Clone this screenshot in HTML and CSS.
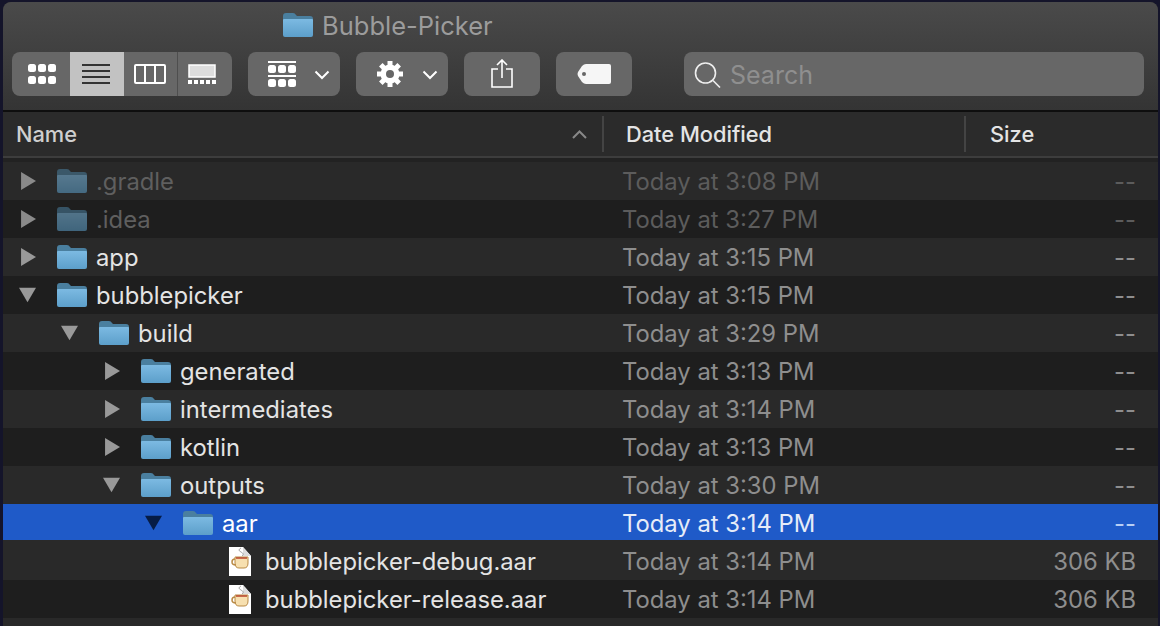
FILE: index.html

```html
<!DOCTYPE html>
<html lang="en">
<head>
  <meta charset="UTF-8" />
  <title>Bubble-Picker</title>
  <link rel="stylesheet" href="styles.css">
</head>
<body>
  <svg class="defs" width="0" height="0">
    <defs>
      <linearGradient id="folderFront" x1="0" y1="0" x2="0" y2="1">
        <stop offset="0" stop-color="#7cbae2" />
        <stop offset="1" stop-color="#5c9fca" />
      </linearGradient>
      <symbol id="folder" viewBox="0 0 30 24">
        <path d="M0 3q0-3 3-3h7q2 0 3 2l1 1h13q3 0 3 3v4H0z" fill="#4a7f9f" />
        <path d="M0 7q0-1 1-1h28q1 0 1 1v15q0 2-2 2H2q-2 0-2-2z" fill="url(#folderFront)" />
      </symbol>
      <symbol id="doc" viewBox="0 0 22 29">
        <path d="M0 0h14l8 9v20H0z" fill="#fff" />
        <path d="M14 0v9h8" fill="#ddd" />
        <path d="M12 1q-4 2 0 4t1 4" fill="none" stroke="#a9a9a9" />
        <path d="M6 10h13v6q0 5-4 5h-5q-4 0-4-5z" fill="#f7e0b0" stroke="#b98a45" />
        <path d="M7 11h11" stroke="#b8452c" stroke-width="1.5" />
        <path d="M6 12q-3 0-3 3t4 3" fill="none" stroke="#b98a45" stroke-width="1.5" />
      </symbol>
    </defs>
  </svg>

  <div class="window">
    <header class="toolbar">
      <div class="title">
        <svg class="title-icon"><use href="#folder" /></svg>
        <span>Bubble-Picker</span>
      </div>
      <div class="tools">
        <div class="segments">
          <div class="seg seg-icons">
            <svg width="28" height="20" viewBox="0 0 28 20" fill="#fff"><rect y="0" width="8" height="8" rx="2.5"/><rect x="10" width="8" height="8" rx="2.5"/><rect x="20" width="8" height="8" rx="2.5"/><rect y="12" width="8" height="8" rx="2.5"/><rect x="10" y="12" width="8" height="8" rx="2.5"/><rect x="20" y="12" width="8" height="8" rx="2.5"/></svg>
          </div>
          <div class="seg seg-list">
            <svg width="28" height="20" viewBox="0 0 28 20" fill="#333"><rect width="28" height="2"/><rect y="6" width="28" height="2"/><rect y="12" width="28" height="2"/><rect y="18" width="28" height="2"/></svg>
          </div>
          <div class="seg seg-cols">
            <svg width="32" height="20" viewBox="0 0 32 20" fill="none" stroke="#fff" stroke-width="2"><rect x="1" y="1" width="30" height="18" rx="1"/><path d="M11 1v18M21 1v18"/></svg>
          </div>
          <div class="seg seg-cover">
            <svg width="28" height="20" viewBox="0 0 28 20"><rect x="1" y="1" width="26" height="12" fill="#ddd" stroke="#fff" stroke-width="1.5"/><g fill="#fff"><rect y="16" width="4" height="4"/><rect x="6" y="16" width="4" height="4"/><rect x="12" y="16" width="4" height="4"/><rect x="18" y="16" width="4" height="4"/><rect x="24" y="16" width="4" height="4"/></g></svg>
          </div>
        </div>
        <div class="btn btn-menu">
          <svg width="28" height="26" viewBox="0 0 28 26" fill="#fff"><rect width="28" height="2"/><rect y="4" width="8" height="8" rx="2.5"/><rect x="10" y="4" width="8" height="8" rx="2.5"/><rect x="20" y="4" width="8" height="8" rx="2.5"/><rect y="14" width="28" height="2"/><rect y="18" width="8" height="8" rx="2.5"/><rect x="10" y="18" width="8" height="8" rx="2.5"/><rect x="20" y="18" width="8" height="8" rx="2.5"/></svg>
          <svg class="chevron" width="16" height="10" viewBox="0 0 16 10"><path d="M1.500 1.500 8 8l6.500-6.500" fill="none" stroke="#fff" stroke-width="2"/></svg>
        </div>
        <div class="btn btn-menu">
          <svg width="28" height="28" viewBox="0 0 28 28"><g stroke="#fff" stroke-width="5"><path d="M14 1v26M1 14h26M4.800 4.800l18.400 18.400M23.200 4.800 4.800 23.200"/></g><circle cx="14" cy="14" r="9.500" fill="#fff"/><circle cx="14" cy="14" r="4" fill="#666"/></svg>
          <svg class="chevron" width="16" height="10" viewBox="0 0 16 10"><path d="M1.500 1.500 8 8l6.500-6.500" fill="none" stroke="#fff" stroke-width="2"/></svg>
        </div>
        <div class="btn btn-share">
          <svg width="22" height="29" viewBox="0 0 22 29" fill="none" stroke="#fff" stroke-width="1.600"><path d="M7 10H1v18h20V10h-6"/><path d="M11 19V1M6 6l5-5 5 5"/></svg>
        </div>
        <div class="btn btn-tag">
          <svg width="34" height="20" viewBox="0 0 34 20"><path d="M9 0h23q2 0 2 2v16q0 2-2 2H9Q7 20 5 18L1 12q-1-2 0-4l4-6Q7 0 9 0z" fill="#f6f6f6"/><circle cx="7" cy="10" r="2" fill="#666"/></svg>
        </div>
        <div class="search">
          <svg width="27" height="27" viewBox="0 0 27 27" fill="none" stroke="#eee" stroke-width="1.600"><circle cx="11.500" cy="12" r="10"/><path d="m19 19.500 7 7"/></svg>
          <span>Search</span>
        </div>
      </div>
    </header>

    <div class="head">
      <div class="col-name">Name <svg class="sort" width="15" height="9" viewBox="0 0 15 9"><path d="M1 8l6.500-6.500L14 8" fill="none" stroke="#888" stroke-width="2"/></svg></div>
      <div class="col-date">Date Modified</div>
      <div class="col-size">Size</div>
    </div>

    <div class="rows">
      <div class="row dim">
        <div class="name"><i class="arrow right"></i><svg class="folder"><use href="#folder" /></svg>.gradle</div>
        <div class="date">Today at 3:08 PM</div><div class="size">--</div>
      </div>
      <div class="row dim">
        <div class="name"><i class="arrow right"></i><svg class="folder"><use href="#folder" /></svg>.idea</div>
        <div class="date">Today at 3:27 PM</div><div class="size">--</div>
      </div>
      <div class="row">
        <div class="name"><i class="arrow right"></i><svg class="folder"><use href="#folder" /></svg>app</div>
        <div class="date">Today at 3:15 PM</div><div class="size">--</div>
      </div>
      <div class="row">
        <div class="name"><i class="arrow down"></i><svg class="folder"><use href="#folder" /></svg>bubblepicker</div>
        <div class="date">Today at 3:15 PM</div><div class="size">--</div>
      </div>
      <div class="row lvl1">
        <div class="name"><i class="arrow down"></i><svg class="folder"><use href="#folder" /></svg>build</div>
        <div class="date">Today at 3:29 PM</div><div class="size">--</div>
      </div>
      <div class="row lvl2">
        <div class="name"><i class="arrow right"></i><svg class="folder"><use href="#folder" /></svg>generated</div>
        <div class="date">Today at 3:13 PM</div><div class="size">--</div>
      </div>
      <div class="row lvl2">
        <div class="name"><i class="arrow right"></i><svg class="folder"><use href="#folder" /></svg>intermediates</div>
        <div class="date">Today at 3:14 PM</div><div class="size">--</div>
      </div>
      <div class="row lvl2">
        <div class="name"><i class="arrow right"></i><svg class="folder"><use href="#folder" /></svg>kotlin</div>
        <div class="date">Today at 3:13 PM</div><div class="size">--</div>
      </div>
      <div class="row lvl2">
        <div class="name"><i class="arrow down"></i><svg class="folder"><use href="#folder" /></svg>outputs</div>
        <div class="date">Today at 3:30 PM</div><div class="size">--</div>
      </div>
      <div class="row lvl3 selected">
        <div class="name"><i class="arrow down"></i><svg class="folder"><use href="#folder" /></svg>aar</div>
        <div class="date">Today at 3:14 PM</div><div class="size">--</div>
      </div>
      <div class="row file">
        <div class="name"><svg class="doc"><use href="#doc" /></svg>bubblepicker-debug.aar</div>
        <div class="date">Today at 3:14 PM</div><div class="size">306 KB</div>
      </div>
      <div class="row file">
        <div class="name"><svg class="doc"><use href="#doc" /></svg>bubblepicker-release.aar</div>
        <div class="date">Today at 3:14 PM</div><div class="size">306 KB</div>
      </div>
      <div class="row"></div>
    </div>
  </div>
</body>
</html>
```

FILE: styles.css

```css
* {
  box-sizing: border-box;
}
html, body {
  height: 100%;
  overflow: hidden;
}
body {
  margin: 0;
  padding: 2px 2px 0 3px;
  background-color: #14142a;
  font-family: Inter, "Liberation Sans", sans-serif;
  color: #e4e4e4;
}
.defs {
  position: absolute;
}
.window {
  height: 100%;
  background-color: #292929;
  border-radius: 8px 8px 0 0;
  overflow: hidden;
}

/* toolbar */
.toolbar {
  height: 110px;
  padding-top: 8px;
  background: linear-gradient(#4a4a4a, #343434);
  border-bottom: 2px solid #0e0e0e;
}
.title {
  display: flex;
  align-items: center;
  height: 30px;
  padding-left: 280px;
  gap: 9px;
  font-size: 25.500px;
  color: #9c9c9c;
}
.title-icon {
  width: 30px;
  height: 24px;
}
.tools {
  display: flex;
  margin-top: 12px;
  padding-left: 9px;
}
.segments, .btn, .search {
  display: flex;
  align-items: center;
  height: 44px;
  background-color: #676767;
  border-radius: 8px;
}
.segments {
  width: 220px;
  margin-right: 16px;
  overflow: hidden;
}
.seg {
  display: flex;
  align-items: center;
  height: 100%;
}
.seg-icons { width: 58px; padding-left: 16px; }
.seg-list { width: 54px; padding-left: 12px; background-color: #c2c2c2; }
.seg-cols { width: 53px; padding-left: 10px; }
.seg-cover { width: 55px; padding-left: 10px; border-left: 1px solid #4e4e4e; }
.btn {
  margin-right: 16px;
}
.btn-menu {
  width: 92px;
  padding-left: 20px;
  gap: 18px;
}
.chevron {
  margin-top: 2px;
}
.btn-share, .btn-tag {
  width: 76px;
  justify-content: center;
}
.btn-share svg {
  margin-bottom: 1px;
}
.btn-tag {
  margin-right: 52px;
}
.search {
  width: 460px;
  padding-left: 10px;
  gap: 9px;
  font-size: 25px;
  color: #8f8f8f;
}
.search span {
  padding-top: 1px;
}

/* column headers */
.head {
  display: flex;
  align-items: center;
  height: 46px;
  margin-bottom: 4px;
  background-color: #2b2b2b;
  border-bottom: 2px solid #3d3d3d;
  box-shadow: 0 4px 0 #222;
  font-size: 21.800px;
  font-weight: 500;
}
.head > div {
  display: flex;
  align-items: center;
  height: 36px;
}
.col-name {
  width: 599px;
  padding: 0 15px 0 13px;
  justify-content: space-between;
  color: #cfcfcf;
}
.col-date {
  width: 362px;
  padding-left: 22px;
  border-left: 2px solid #444;
}
.col-size {
  padding-left: 24px;
  border-left: 2px solid #444;
}

/* rows */
.row {
  display: flex;
  align-items: center;
  height: 38px;
  font-size: 23.800px;
}
.row:nth-child(even) {
  background-color: #1e1e1e;
}
.name {
  display: flex;
  align-items: center;
  width: 619px;
  padding-left: 16px;
  white-space: nowrap;
}
.lvl1 .name { padding-left: 58px; }
.lvl2 .name { padding-left: 100px; }
.lvl3 .name { padding-left: 142px; }
.file .name { padding-left: 226px; }
.date {
  width: 401px;
  color: #8e8e8e;
}
.size {
  width: 113px;
  text-align: right;
  color: #8e8e8e;
}
.arrow {
  width: 17px;
  height: 18px;
  margin-right: 21px;
  background-color: #999;
}
.arrow.right {
  clip-path: polygon(12% 0, 100% 50%, 12% 100%);
}
.arrow.down {
  clip-path: polygon(0 10%, 100% 10%, 50% 90%);
}
.folder {
  width: 30px;
  height: 24px;
  margin-right: 9px;
}
.doc {
  width: 22px;
  height: 29px;
  margin-right: 14px;
}
.dim .name {
  color: #5f5f5f;
}
.dim .arrow {
  background-color: #8a8a8a;
}
.dim .folder {
  opacity: 0.55;
}
.dim .date, .dim .size {
  color: #5c5c5c;
}
.row.selected {
  padding-top: 2px;
  border-bottom: 2px solid transparent;
  background-color: #1f5ac8;
  background-clip: padding-box;
  color: #fff;
}
.selected .date {
  color: #e6ecf8;
}
.selected .arrow {
  background-color: #061c45;
}
.selected .size {
  color: #b8cff5;
}
```
